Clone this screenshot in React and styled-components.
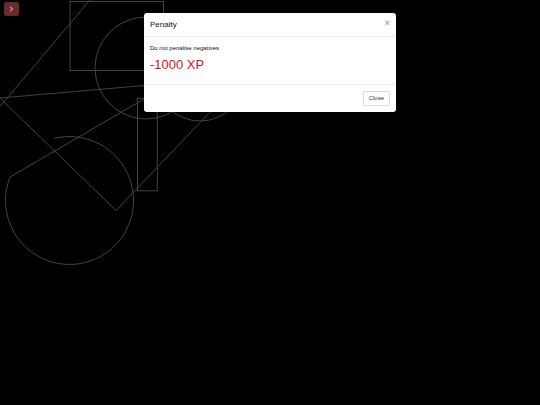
import React, { useState } from "react"
import styled, { createGlobalStyle } from "styled-components"

const App = () => {
  const [showModal, setShowModal] = useState(true)

  const closeModal = () => {
    setShowModal(false)
  }

  return (
    <>
      <GlobalStyle />
      <Page>
        <Drawing />
        <MenuBtn aria-label="Open menu" onClick={() => setShowModal(true)}>
          <svg width="5" height="6" viewBox="0 0 5 6" aria-hidden="true">
            <path
              d="M1 0.8 L3.4 3 L1 5.2"
              fill="none"
              stroke="#a58c8c"
              strokeWidth="1.5"
            />
          </svg>
        </MenuBtn>
        {showModal && (
          <Modal role="dialog" aria-labelledby="modal-title">
            <ModalHeader>
              <ModalTitle id="modal-title">Penalty</ModalTitle>
              <DismissBtn aria-label="Dismiss" onClick={closeModal}>
                ×
              </DismissBtn>
            </ModalHeader>
            <ModalBody>
              <Reason>Do not penalise negatives</Reason>
              <Points>-1000 XP</Points>
            </ModalBody>
            <ModalFooter>
              <CloseBtn onClick={closeModal}>Close</CloseBtn>
            </ModalFooter>
          </Modal>
        )}
      </Page>
    </>
  )
}

const Drawing = () => (
  <Canvas aria-hidden="true">
    <rect x="70" y="1.5" width="93.5" height="69" />
    <rect x="137.5" y="98.3" width="19.8" height="92.5" />
    <circle cx="146" cy="68" r="51" />
    <circle cx="200" cy="76" r="45" />
    <path d="M90 0 L0 106.5" />
    <path d="M144 85.5 L0 98 L116 210.5 L212 110" />
    <path d="M54 138.4 A64 64 0 1 1 10 177 L144 99" />
  </Canvas>
)

const GlobalStyle = createGlobalStyle`
  * {
    box-sizing: border-box;
  }

  body {
    margin: 0;
    background: #000;
    font-family: "Liberation Sans", Arial, sans-serif;
  }
`

const Page = styled.main`
  position: relative;
  min-height: 100vh;
  padding-top: 13px;
  overflow: hidden;
`

const Canvas = styled.svg`
  position: absolute;
  top: 0;
  left: 0;
  width: 100%;
  height: 100%;
  fill: none;
  stroke: #424242;
  stroke-width: 1;
`

const MenuBtn = styled.button`
  position: absolute;
  top: 2px;
  left: 4px;
  display: flex;
  align-items: center;
  justify-content: center;
  width: 15px;
  height: 14px;
  padding: 0;
  border: 1px solid #642626;
  border-radius: 2px;
  background: #6c2a2a;
  cursor: pointer;
`

const Modal = styled.section`
  position: relative;
  width: 252px;
  max-width: 100%;
  margin: 0 auto;
  border-radius: 3px;
  background: #fff;
  color: #111;
`

const ModalHeader = styled.header`
  display: flex;
  align-items: flex-start;
  justify-content: space-between;
  padding: 6px;
  border-bottom: 1px solid #f0f0f0;
`

const ModalTitle = styled.h4`
  margin: 0;
  font-size: 8px;
  font-weight: 400;
  line-height: 11px;
`

const DismissBtn = styled.button`
  padding: 0;
  border: 0;
  background: transparent;
  color: #aaa;
  font-family: inherit;
  font-size: 9px;
  font-weight: 700;
  line-height: 9px;
  cursor: pointer;
`

const ModalBody = styled.div`
  padding: 6px;
`

const Reason = styled.p`
  margin: 0 0 3px;
  font-size: 6px;
  line-height: 10px;
`

const Points = styled.h3`
  margin: 0 0 4px;
  color: #dc1414;
  font-size: 13px;
  font-weight: 400;
  line-height: 18px;
`

const ModalFooter = styled.footer`
  display: flex;
  justify-content: flex-end;
  padding: 6px;
  border-top: 1px solid #f0f0f0;
`

const CloseBtn = styled.button`
  padding: 3px 5px;
  border: 1px solid #ddd;
  border-radius: 2px;
  background: #fff;
  color: #333;
  font-family: inherit;
  font-size: 6px;
  line-height: 7px;
  cursor: pointer;
`

export default App
